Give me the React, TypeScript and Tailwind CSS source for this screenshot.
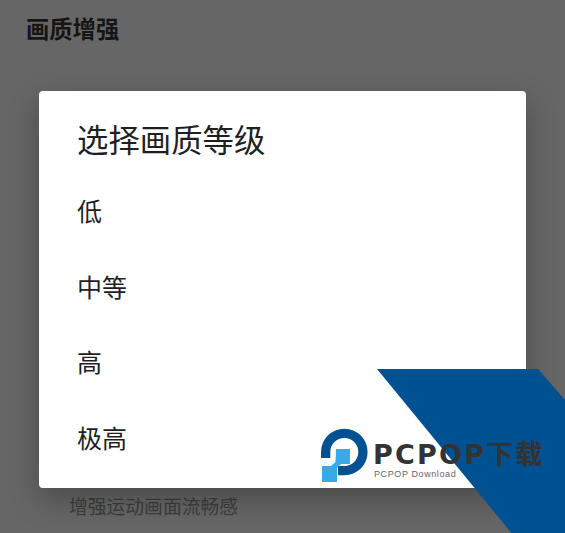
const cjk = "font-['Roboto','Noto_Sans_CJK_SC',sans-serif]";

function Watermark() {
  return (
    <div className="absolute inset-0 pointer-events-none">
      <svg width="565" height="533" viewBox="0 0 565 533" className="absolute left-0 top-0">
        <polygon points="377,369 538,369 565,400 565,533 511.5,533" fill="#005192" />
        <path
          d="M321 458 L321 452 A23.3 23.3 0 1 1 344.3 475.3 L338 475.3 L338 466 L344.3 466 A14 14 0 1 0 330.3 452 L330.3 458 Z"
          fill="#005192"
        />
        <path
          d="M336 449 L350 449 L350 464 L341 464 L337 468 L337 482 L322 482 L322 466 L331 466 L335.500 462 Z"
          fill="#3aa9e8"
        />
      </svg>
      <div className="absolute left-[373px] top-[443px] flex flex-col whitespace-nowrap">
        <div className="font-['DejaVu_Sans','Noto_Sans_CJK_SC',sans-serif] font-bold text-[27px] leading-[24px] tracking-[2.2px] text-[#333]">
          PCPOP下载
        </div>
        <div className="ml-[1px] mt-[2px] font-['Liberation_Sans',sans-serif] text-[9px] leading-[10px] tracking-[0.6px] text-[#666]">
          PCPOP Download
        </div>
      </div>
    </div>
  );
}

export default function App() {
  const options = ["低", "中等", "高", "极高"];
  return (
    <div className={`relative w-[565px] h-[533px] overflow-hidden bg-[#666666] ${cjk}`}>
      <div className="flex h-full flex-col justify-between">
        <h1 className="pl-[26px] pt-[14px] text-[23.3px] leading-[32px] font-bold text-[#151515]">画质增强</h1>
        <p className="pl-[69px] pb-[12px] text-[18.8px] leading-[26px] text-[#3d3d3d]">增强运动画面流畅感</p>
      </div>

      <div className="absolute left-[39px] top-[91px] w-[487px] h-[397px] rounded-[4px] bg-white pl-[38px] pt-[30px] shadow-[0_11px_30px_rgba(0,0,0,0.28)]">
        <h2 className="text-[31.4px] leading-[42px] text-[#1f1f1f]">选择画质等级</h2>
        <ul className="mt-[34px] flex flex-col">
          {options.map((o) => (
            <li key={o} className="h-[75.5px] text-[25px] leading-[32px] text-[#1f1f1f]">
              {o}
            </li>
          ))}
        </ul>
      </div>

      <Watermark />
    </div>
  );
}
